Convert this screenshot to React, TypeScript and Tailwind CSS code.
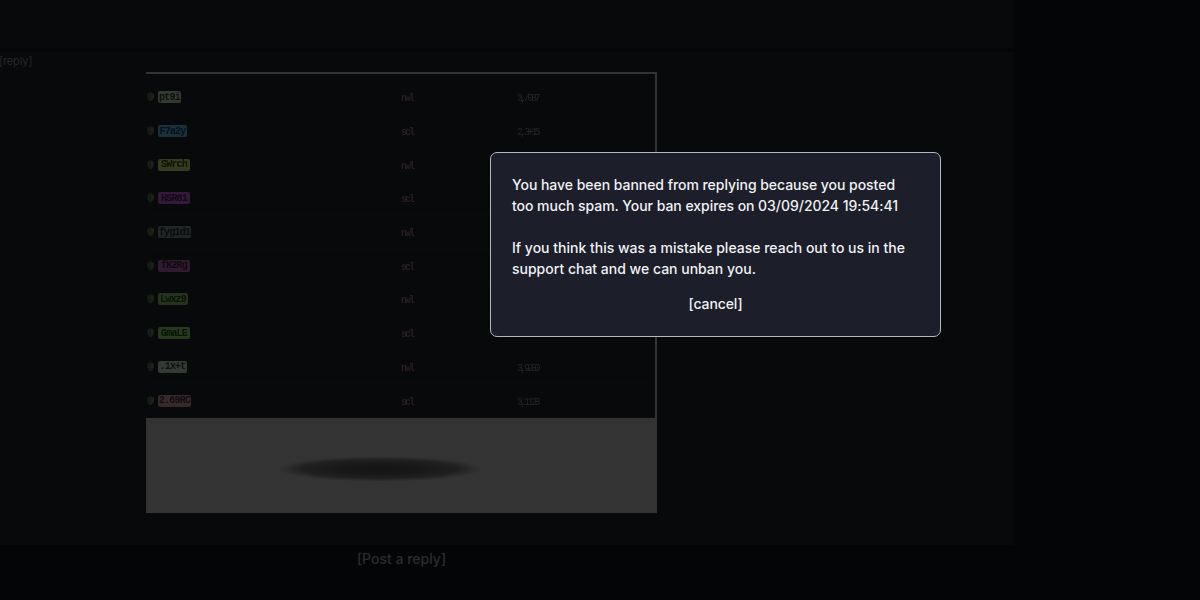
type Row = { name: string; side: string; amount?: string; chip: string };

const rows: Row[] = [
  { name: "pt9i", side: "nwl", amount: "3,/087", chip: "w-[23px] bg-[#323931] text-[#0d120c]" },
  { name: "F7a2y", side: "scl", amount: "2,3+15", chip: "w-[29px] bg-[#1c3039] text-[#04121e]" },
  { name: "SWrch", side: "nwl", chip: "w-[32px] bg-[#343b1f] text-[#0e1307]" },
  { name: "HSR81", side: "scl", chip: "w-[32px] bg-[#34193a] text-[#120817]" },
  { name: "fyg1d1", side: "nwl", chip: "w-[33px] bg-[#222526] text-[#0a0c0d]" },
  { name: "fK2Rg", side: "scl", chip: "w-[32px] bg-[#2f1a2e] text-[#110912]" },
  { name: "Lwxz9", side: "nwl", chip: "w-[30px] bg-[#25331e] text-[#0a1208]" },
  { name: "GmaLE", side: "scl", chip: "w-[32px] bg-[#27381c] text-[#091206]" },
  { name: ".1x+t", side: "nwl", amount: "3,9280", chip: "w-[29px] bg-[#333a33] text-[#0e120e]" },
  { name: "2.69RC", side: "scl", amount: "3,1128", chip: "w-[33px] bg-[#37282c] text-[#130c0e]" },
];

function Mark() {
  return (
    <svg className="h-3 w-2 shrink-0 blur-[0.5px]" viewBox="0 0 8 12" fill="none">
      <path d="M1 2 4 1l3 2v4L5 10H3L1 7Z" fill="#151a15" />
      <path d="M4 2 7 3v3L4 9Z" fill="#222016" />
      <path d="M1 3v4l2 3" stroke="#12271a" />
    </svg>
  );
}

function Attachment() {
  return (
    <div className="ml-[146px] h-[441px] w-[511px] shrink-0 bg-[#333333] pt-0.5 pr-0.5">
      <div className="flex h-[344px] flex-col overflow-hidden bg-[#08090b] pt-[7px] font-['Liberation_Mono',monospace]">
        {rows.map((row) => (
          <div
            key={row.name}
            className="grid h-[33.7px] shrink-0 grid-cols-[255px_116px_1fr] items-center border-b border-[#0a0b0d]"
          >
            <div className="flex items-center gap-[3px] pl-px">
              <Mark />
              <span className={`flex h-3 items-center justify-center overflow-hidden rounded-[2px] text-[10px] leading-3 font-bold tracking-[-0.8px] ${row.chip}`}>
                <span className="pt-px blur-[0.4px]">{row.name}</span>
              </span>
            </div>
            <span className="pt-1 text-[10px] leading-3 font-bold tracking-[-2px] text-[#2b1e23] blur-[0.5px]">{row.side}</span>
            {row.amount && (
              <span className="pt-1 text-[10px] leading-3 tracking-[-2.5px] text-[#242627] blur-[0.4px]">{row.amount}</span>
            )}
          </div>
        ))}
      </div>
      <div className="flex h-[95px] items-center pl-[133px]">
        <svg className="mt-[7px] h-[30px] w-[204px]" viewBox="0 0 204 30">
          <defs>
            <radialGradient id="shadow">
              <stop offset="0" stopColor="#151515" />
              <stop offset="0.4" stopColor="#181818" />
              <stop offset="0.75" stopColor="#202020" />
              <stop offset="0.9" stopColor="#2b2b2b" />
              <stop offset="1" stopColor="#333333" />
            </radialGradient>
          </defs>
          <ellipse cx="101" cy="15" rx="102" ry="12.5" fill="url(#shadow)" />
        </svg>
      </div>
    </div>
  );
}

export default function App() {
  return (
    <div className="relative flex h-[600px] w-[1200px] flex-col overflow-hidden bg-[#040507] font-['Inter',sans-serif]">
      <div className="h-12 w-[1013px] shrink-0 bg-[#08090b]" />
      <article className="mt-1 flex h-[493px] w-[1013px] shrink-0 flex-col bg-[#08090b]">
        <button className="-ml-px flex h-5 self-start pt-px text-[11px] leading-[17px] tracking-[-0.1px] text-[#27282a]">[reply]</button>
        <Attachment />
      </article>
      <button className="mt-[3px] w-[803px] text-center text-sm leading-[21px] font-medium text-[#2b2c2e]">
        [Post a reply]
      </button>
      <div
        role="dialog"
        className="absolute top-[152px] left-[490px] flex h-[185px] w-[451px] flex-col rounded-[7px] border border-[#b4b6bd] bg-[#1c1e29] px-[21px] pt-[21px] text-sm leading-[21px] font-medium text-[#f0f1f4]"
      >
        <p className="tracking-[-0.04px]">You have been banned from replying because you posted too much spam. Your ban expires on 03/09/2024 19:54:41</p>
        <p className="mt-[21px]">If you think this was a mistake please reach out to us in the support chat and we can unban you.</p>
        <button className="mt-[14px] self-center tracking-[-0.1px]">[cancel]</button>
      </div>
    </div>
  );
}
